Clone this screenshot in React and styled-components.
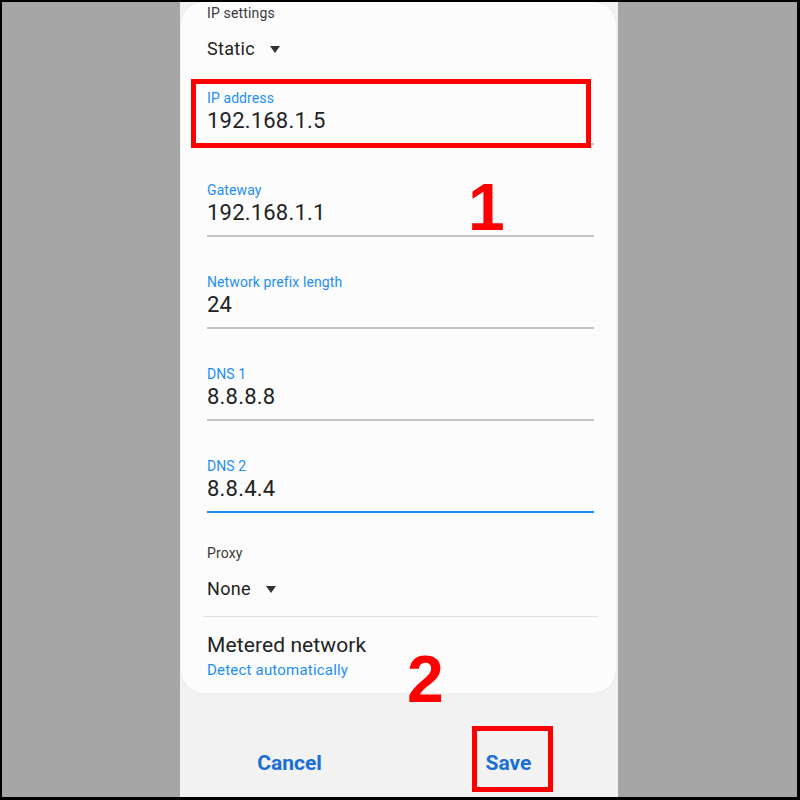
import React from 'react';
import styled, { createGlobalStyle } from 'styled-components';

const fields = [
  { label: 'IP address', value: '192.168.1.5', highlight: true },
  { label: 'Gateway', value: '192.168.1.1', marker: '1' },
  { label: 'Network prefix length', value: '24' },
  { label: 'DNS 1', value: '8.8.8.8' },
  { label: 'DNS 2', value: '8.8.4.4', focused: true },
];

const Caret = () => (
  <svg width="10" height="7" viewBox="0 0 10 7">
    <polygon points="0,0 10,0 5,7" fill="#333" />
  </svg>
);

const App = () => {
  return (
    <>
      <GlobalStyle />
      <Frame>
        <Phone>
          <Card>
            <SectionLabel>IP settings</SectionLabel>
            <Dropdown>
              Static <Caret />
            </Dropdown>

            {fields.map((f, i) => (
              <Field key={f.label} $first={i === 0} $focused={f.focused}>
                <FieldLabel>{f.label}</FieldLabel>
                <FieldValue>{f.value}</FieldValue>
                {f.highlight && <HighlightBox $left={-16} $right={3} $top={-10} $bottom={-5} />}
                {f.marker && <Marker $top={-7} $left={261}>{f.marker}</Marker>}
              </Field>
            ))}

            <SectionLabel $gap={31}>Proxy</SectionLabel>
            <Dropdown>
              None <Caret />
            </Dropdown>

            <Divider />

            <Metered>
              <MeteredTitle>Metered network</MeteredTitle>
              <MeteredSub>Detect automatically</MeteredSub>
              <Marker $top={14} $left={200}>2</Marker>
            </Metered>
          </Card>

          <Buttons>
            <ActionButton>
              <span>Cancel</span>
            </ActionButton>
            <ActionButton>
              <Boxed>
                Save
                <HighlightBox $left={-14} $right={-22} $top={-23} $bottom={-15} />
              </Boxed>
            </ActionButton>
          </Buttons>
        </Phone>
      </Frame>
    </>
  );
};

// Styled Components
const GlobalStyle = createGlobalStyle`
  html, body {
    margin: 0;
    padding: 0;
  }
  body {
    font-family: Roboto, "Noto Sans", Arial, sans-serif;
  }
`;

const Frame = styled.div`
  width: 800px;
  height: 800px;
  box-sizing: border-box;
  border: 2px solid #000;
  border-right-width: 3px;
  border-bottom-width: 3px;
  background: #a6a6a6;
  display: flex;
  justify-content: center;
  overflow: hidden;
`;

const Phone = styled.div`
  width: 438px;
  margin-left: -1px;
  background: #f2f2f2;
  display: flex;
  flex-direction: column;
`;

const Card = styled.div`
  position: relative;
  margin: 0 2px 0 1px;
  padding: 2px 22px 14px 26px;
  background: #fcfcfc;
  border-radius: 22px;
  box-shadow: 0 0 1px rgba(0, 0, 0, 0.18);
  display: flex;
  flex-direction: column;
`;

const SectionLabel = styled.div`
  margin-top: ${p => p.$gap || 0}px;
  font-size: 14px;
  line-height: 18px;
  letter-spacing: 0.15px;
  color: #3a3a3a;
`;

const Dropdown = styled.div`
  margin-top: 15px;
  display: flex;
  align-items: center;
  gap: 15px;
  font-size: 18px;
  line-height: 24px;
  letter-spacing: 0.3px;
  color: #222;
  svg {
    margin-top: 1px;
  }
`;

const Field = styled.div`
  position: relative;
  margin-top: ${p => (p.$first ? 28 : 36)}px;
  padding-bottom: 8px;
  border-bottom: 2px solid ${p => (p.$focused ? '#1a8cf2' : '#c4c4c4')};
`;

const FieldLabel = styled.div`
  font-size: 14px;
  line-height: 18px;
  letter-spacing: 0.1px;
  color: #1e8ff5;
`;

const FieldValue = styled.div`
  font-size: 22px;
  line-height: 28px;
  letter-spacing: 0.2px;
  color: #222;
`;

const HighlightBox = styled.div`
  position: absolute;
  left: ${p => p.$left}px;
  right: ${p => p.$right}px;
  top: ${p => p.$top}px;
  bottom: ${p => p.$bottom}px;
  border: 5px solid #ff0000;
  pointer-events: none;
`;

const Marker = styled.div`
  position: absolute;
  top: ${p => p.$top}px;
  left: ${p => p.$left}px;
  font-family: "Liberation Sans", Arial, sans-serif;
  font-weight: 700;
  font-size: 66px;
  line-height: 66px;
  letter-spacing: 0;
  color: #ff0000;
  z-index: 2;
`;

const Divider = styled.div`
  margin: 15px -4px 0 -4px;
  height: 1px;
  background: #e2e2e2;
`;

const Metered = styled.div`
  position: relative;
  margin-top: 15px;
`;

const MeteredTitle = styled.div`
  font-size: 21px;
  line-height: 26px;
  letter-spacing: 0.1px;
  color: #222;
`;

const MeteredSub = styled.div`
  margin-top: 3px;
  font-size: 15px;
  line-height: 18px;
  letter-spacing: 0.2px;
  color: #1e8ff5;
`;

const Buttons = styled.div`
  display: flex;
  padding-top: 56px;
`;

const ActionButton = styled.div`
  flex: 1;
  display: flex;
  justify-content: center;
  font-size: 21px;
  font-weight: 700;
  line-height: 28px;
  color: #1a6fd4;
`;

const Boxed = styled.span`
  position: relative;
`;

export default App;
